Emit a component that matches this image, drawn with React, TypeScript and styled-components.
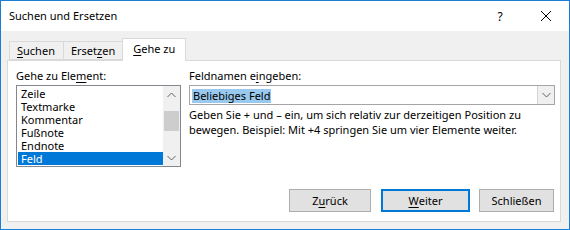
import React from "react";
import styled, { createGlobalStyle } from "styled-components";

const GlobalStyle = createGlobalStyle`
  html, body {
    margin: 0;
    padding: 0;
    background: #ffffff;
  }
  body {
    font-family: "Noto Sans", "Liberation Sans", sans-serif;
    font-size: 11px;
    line-height: 15px;
    color: #000;
  }
  * { box-sizing: border-box; }
`;

const Window = styled.div`
  width: 570px;
  height: 230px;
  border: 1px solid #1a7fd4;
  background: #f0f0f0;
  display: flex;
  flex-direction: column;
`;

const TitleBar = styled.div`
  height: 30px;
  background: #ffffff;
  display: flex;
  align-items: center;
  padding-left: 8px;
`;

const Title = styled.div`
  flex: 1;
  font-size: 11px;
  padding-bottom: 1px;
`;

const CaptionButton = styled.div`
  width: 46px;
  height: 30px;
  display: flex;
  align-items: center;
  justify-content: center;
  font-size: 12px;
  color: #000;
`;

const Body = styled.div`
  flex: 1;
  padding: 7px 8px 7px 6px;
  display: flex;
  flex-direction: column;
`;

const TabStrip = styled.div`
  height: 22px;
  display: flex;
  align-items: flex-end;
  padding-left: 2px;
  position: relative;
  z-index: 1;
`;

const Tab = styled.div<{ $active?: boolean; $first?: boolean }>`
  height: ${(p) => (p.$active ? "23px" : "19px")};
  margin-bottom: ${(p) => (p.$active ? "-1px" : "0")};
  margin-left: ${(p) => (p.$active ? "-2px" : p.$first ? "0" : "-1px")};
  padding: ${(p) => (p.$active ? "2px 10px 0 10px" : "1px 8px 0 7px")};
  background: ${(p) => (p.$active ? "#ffffff" : "#f0f0f0")};
  border: 1px solid #d9d9d9;
  border-bottom: ${(p) => (p.$active ? "none" : "1px solid #d9d9d9")};
  white-space: nowrap;
`;

const Panel = styled.div`
  height: 162px;
  background: #ffffff;
  border: 1px solid #d9d9d9;
  padding: 7px 6px 9px 8px;
  display: grid;
  grid-template-columns: 165px 1fr;
  column-gap: 8px;
`;

const Column = styled.div`
  display: flex;
  flex-direction: column;
  min-width: 0;
`;

const Label = styled.div`
  height: 15px;
  margin-bottom: 2px;
  white-space: nowrap;
`;

const Key = styled.span`
  text-decoration: underline;
  text-underline-offset: 2px;
`;

const ListBox = styled.div`
  height: 82px;
  border: 1px solid #828790;
  display: flex;
`;

const Items = styled.div`
  flex: 1;
  padding: 1px 0 1px 1px;
`;

const Item = styled.div<{ $selected?: boolean }>`
  height: 13px;
  line-height: 13px;
  padding-left: 3px;
  overflow: hidden;
  background: ${(p) => (p.$selected ? "#0078d7" : "transparent")};
  color: ${(p) => (p.$selected ? "#ffffff" : "#000")};
  white-space: nowrap;
`;

const ScrollBar = styled.div`
  width: 17px;
  background: #f0f0f0;
  display: flex;
  flex-direction: column;
`;

const ScrollArrow = styled.div`
  height: 17px;
  display: flex;
  align-items: center;
  justify-content: center;
`;

const Track = styled.div`
  flex: 1;
  display: flex;
  flex-direction: column;
  align-items: center;
`;

const Thumb = styled.div`
  width: 15px;
  height: 20px;
  background: #cdcdcd;
`;

const Combo = styled.div`
  height: 20px;
  margin-right: -1px;
  border: 1px solid #a5a5a5;
  display: flex;
  align-items: stretch;
  background: #ffffff;
`;

const ComboText = styled.div`
  flex: 1;
  padding: 2px 0 0 2px;
`;

const Selection = styled.span`
  display: inline-block;
  height: 14px;
  line-height: 14px;
  background: #99c9ef;
  padding: 0 1px;
`;

const ComboButton = styled.div`
  width: 17px;
  border-left: 1px solid #d5d5d5;
  background: #f0f0f0;
  display: flex;
  align-items: center;
  justify-content: center;
`;

const Help = styled.div`
  margin-top: 2px;
  line-height: 15px;
`;

const ButtonRow = styled.div`
  margin-top: auto;
  display: flex;
  justify-content: flex-end;
`;

const Button = styled.div<{ $width: number; $default?: boolean; $gap?: number }>`
  width: ${(p) => p.$width}px;
  height: 23px;
  margin-left: ${(p) => p.$gap ?? 0}px;
  background: #e1e1e1;
  border: ${(p) => (p.$default ? "2px solid #0078d7" : "1px solid #adadad")};
  display: flex;
  align-items: center;
  justify-content: center;
  white-space: nowrap;
`;

const Chevron = ({ up }: { up?: boolean }) => (
  <svg width="9" height="6" viewBox="0 0 9 6">
    <polyline
      points={up ? "0.5,5 4.5,1 8.5,5" : "0.5,1 4.5,5 8.5,1"}
      fill="none"
      stroke="#606060"
      strokeWidth="1"
    />
  </svg>
);

const CloseIcon = () => (
  <svg width="10" height="10" viewBox="0 0 10 10">
    <path d="M0 0 L10 10 M10 0 L0 10" stroke="#000" strokeWidth="1" />
  </svg>
);

const items = ["Zeile", "Textmarke", "Kommentar", "Fußnote", "Endnote", "Feld"];

const App: React.FC = () => {
  return (
    <>
      <GlobalStyle />
      <Window>
        <TitleBar>
          <Title>Suchen und Ersetzen</Title>
          <CaptionButton>?</CaptionButton>
          <CaptionButton>
            <CloseIcon />
          </CaptionButton>
        </TitleBar>
        <Body>
          <TabStrip>
            <Tab $first>
              <Key>S</Key>uchen
            </Tab>
            <Tab>
              Erset<Key>z</Key>en
            </Tab>
            <Tab $active>
              <Key>G</Key>ehe zu
            </Tab>
          </TabStrip>
          <Panel>
            <Column>
              <Label>
                Gehe zu Ele<Key>m</Key>ent:
              </Label>
              <ListBox>
                <Items>
                  {items.map((it) => (
                    <Item key={it} $selected={it === "Feld"}>
                      {it}
                    </Item>
                  ))}
                </Items>
                <ScrollBar>
                  <ScrollArrow>
                    <Chevron up />
                  </ScrollArrow>
                  <Track>
                    <Thumb style={{ marginTop: 8 }} />
                  </Track>
                  <ScrollArrow>
                    <Chevron />
                  </ScrollArrow>
                </ScrollBar>
              </ListBox>
            </Column>
            <Column>
              <Label>
                Feldnamen e<Key>i</Key>ngeben:
              </Label>
              <Combo>
                <ComboText>
                  <Selection>Beliebiges Feld</Selection>
                </ComboText>
                <ComboButton>
                  <Chevron />
                </ComboButton>
              </Combo>
              <Help>
                Geben Sie + und – ein, um sich relativ zur derzeitigen Position zu
                <br />
                bewegen. Beispiel: Mit +4 springen Sie um vier Elemente weiter.
              </Help>
              <ButtonRow>
                <Button $width={82}>
                  Z<Key>u</Key>rück
                </Button>
                <Button $width={89} $default $gap={10}>
                  <Key>W</Key>eiter
                </Button>
                <Button $width={75} $gap={9}>
                  Schließen
                </Button>
              </ButtonRow>
            </Column>
          </Panel>
        </Body>
      </Window>
    </>
  );
};

export default App;
